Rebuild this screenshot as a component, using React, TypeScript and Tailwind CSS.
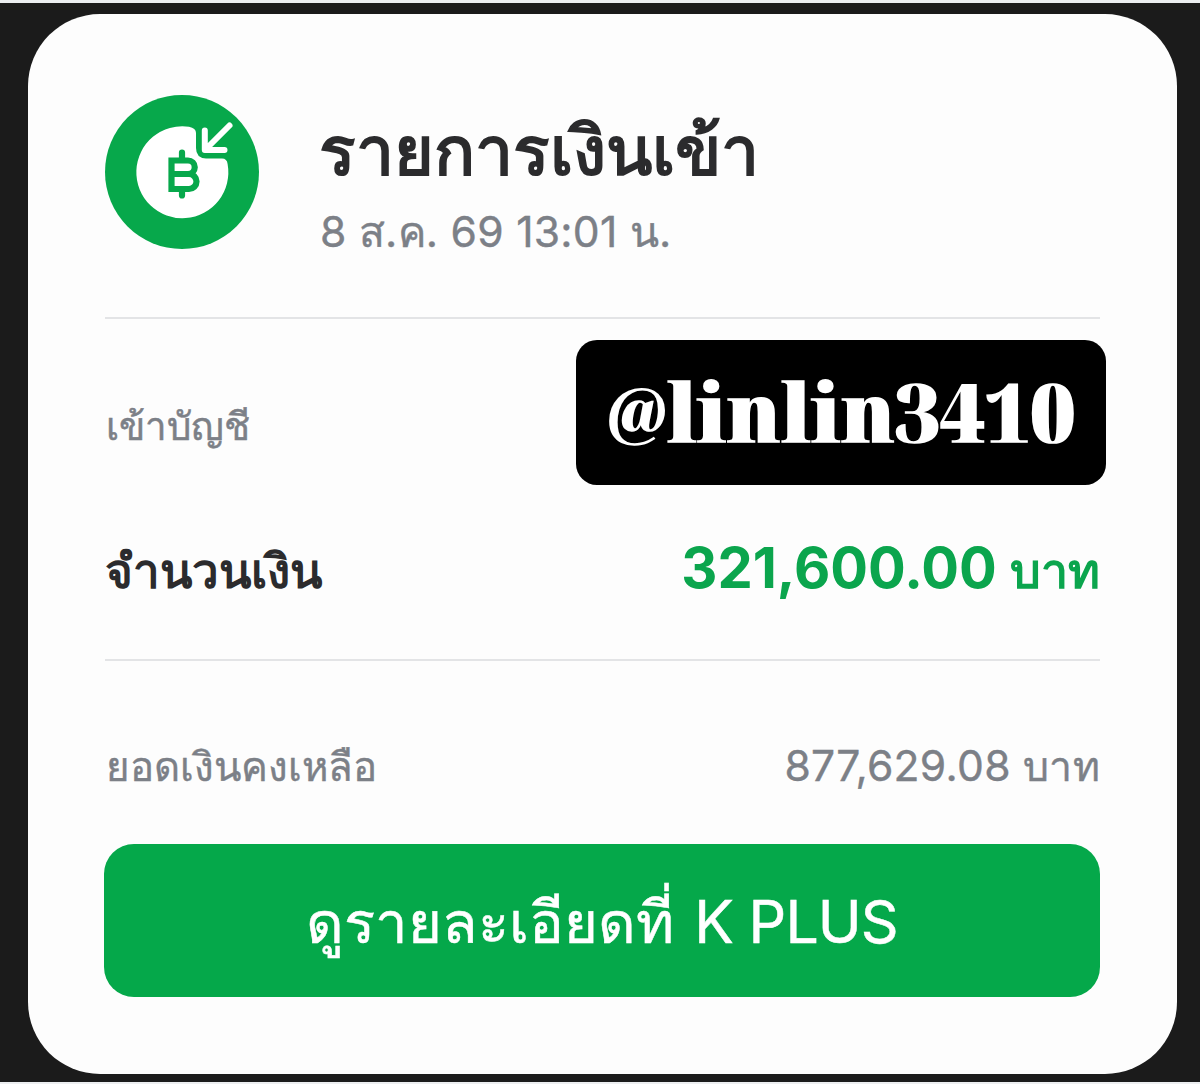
import React from 'react';

function IncomingMoneyIcon() {
  return (
    <svg viewBox="0 0 154 154" className="h-[154px] w-[154px] shrink-0" fill="none">
      <circle cx="77" cy="77" r="77" fill="#07a84b" />
      {/* Coin with the corner cut out for the arrow */}
      <path
        d="M84 31.700 A46 46 0 1 0 122.600 69 Q122 63.500 117 63.500 H101 Q91 63 91 53 V38 Q91 33 84 31.700 Z"
        fill="#fff"
      />
      {/* Arrow */}
      <path
        d="M124.500 30.500 L102 53 M99.800 35.500 V55 H119.500"
        stroke="#fff"
        strokeWidth="6"
        strokeLinecap="round"
        strokeLinejoin="round"
      />
      {/* Baht sign */}
      <path
        d="M66.500 65.500 H83 A6.500 6.500 0 0 1 83 79 H66.500 Z M66.500 79 H84 A7.200 7.200 0 0 1 84 94 H66.500 Z"
        stroke="#07a84b"
        strokeWidth="6.200"
      />
      <path d="M77 57.500 V64 M77 95 V100.500" stroke="#07a84b" strokeWidth="6.200" strokeLinecap="round" />
    </svg>
  );
}

export default function App() {
  return (
    <div className="flex h-[1084px] w-[1200px] flex-col overflow-hidden border-t-[3px] border-b-2 border-t-[#eceef0] border-b-[#eceef0] bg-[#1b1b1b] pt-[11px] pl-[28px] font-['Inter','Noto_Sans',sans-serif] text-[#7c8087]">
      <div className="flex h-[1060px] w-[1149px] flex-col rounded-[72px] bg-[#fdfdfd] px-[77px] pt-[81px]">
        {/* Header */}
        <div className="flex h-[224px] gap-[60px] border-b-2 border-[#e3e4e6] whitespace-nowrap">
          <IncomingMoneyIcon />
          <div className="pt-[10px]">
            <h1 className="text-[68px] leading-[90px] font-semibold text-[#2b2b2d]">รายการเงินเข้า</h1>
            <p className="pt-[2px] pl-px text-[42.600px] leading-[70px] tracking-[0.250px] [-webkit-text-stroke:0.4px]">
              8 ส.ค. 69 13:01 น.
            </p>
          </div>
        </div>

        {/* Details */}
        <div className="flex h-[342px] flex-col border-b-2 border-[#e3e4e6] pt-[21px] whitespace-nowrap">
          <div className="-mr-[6px] flex h-[145px] items-center justify-between">
            <span className="pt-[29px] pl-px text-[38.500px] font-medium [-webkit-text-stroke:0.5px]">เข้าบัญชี</span>
            <span className="flex h-[145px] w-[530px] items-center justify-center rounded-[21px] bg-black pb-[3px] font-['Noto_Serif_Display','DejaVu_Serif',serif] text-[79.200px] leading-[100px] font-black text-white [-webkit-text-stroke:1.8px_white]">
              <span>
                <span className="align-[6px] text-[65px] leading-none">@</span>linlin3410
              </span>
            </span>
          </div>
          <div className="flex h-[166px] items-baseline justify-between pt-[50px]">
            <span className="text-[47.500px] font-semibold text-[#2b2b2d]">จำนวนเงิน</span>
            <span className="text-[56px] leading-[66px] font-bold text-[#0ba54d]">
              321,600.00 <span className="text-[48.500px] font-semibold">บาท</span>
            </span>
          </div>
        </div>

        {/* Balance */}
        <div className="flex h-[183px] items-baseline justify-between pt-[76px] whitespace-nowrap [-webkit-text-stroke:0.4px]">
          <span className="pl-px text-[40.200px] font-medium">ยอดเงินคงเหลือ</span>
          <span className="text-[42.600px] leading-[52px] tracking-[0.300px]">
            877,629.08 <span className="text-[41px] font-medium">บาท</span>
          </span>
        </div>

        <button className="-ml-px flex h-[153px] w-[996px] items-baseline justify-center gap-[20px] rounded-[30px] bg-[#05a84a] pt-[42px] text-[59px] leading-[72px] whitespace-nowrap text-white [-webkit-text-stroke:0.5px]">
          <span className="text-[58px] font-medium">ดูรายละเอียดที่</span>
          <span className="tracking-[-0.900px]">K PLUS</span>
        </button>
      </div>
    </div>
  );
}
